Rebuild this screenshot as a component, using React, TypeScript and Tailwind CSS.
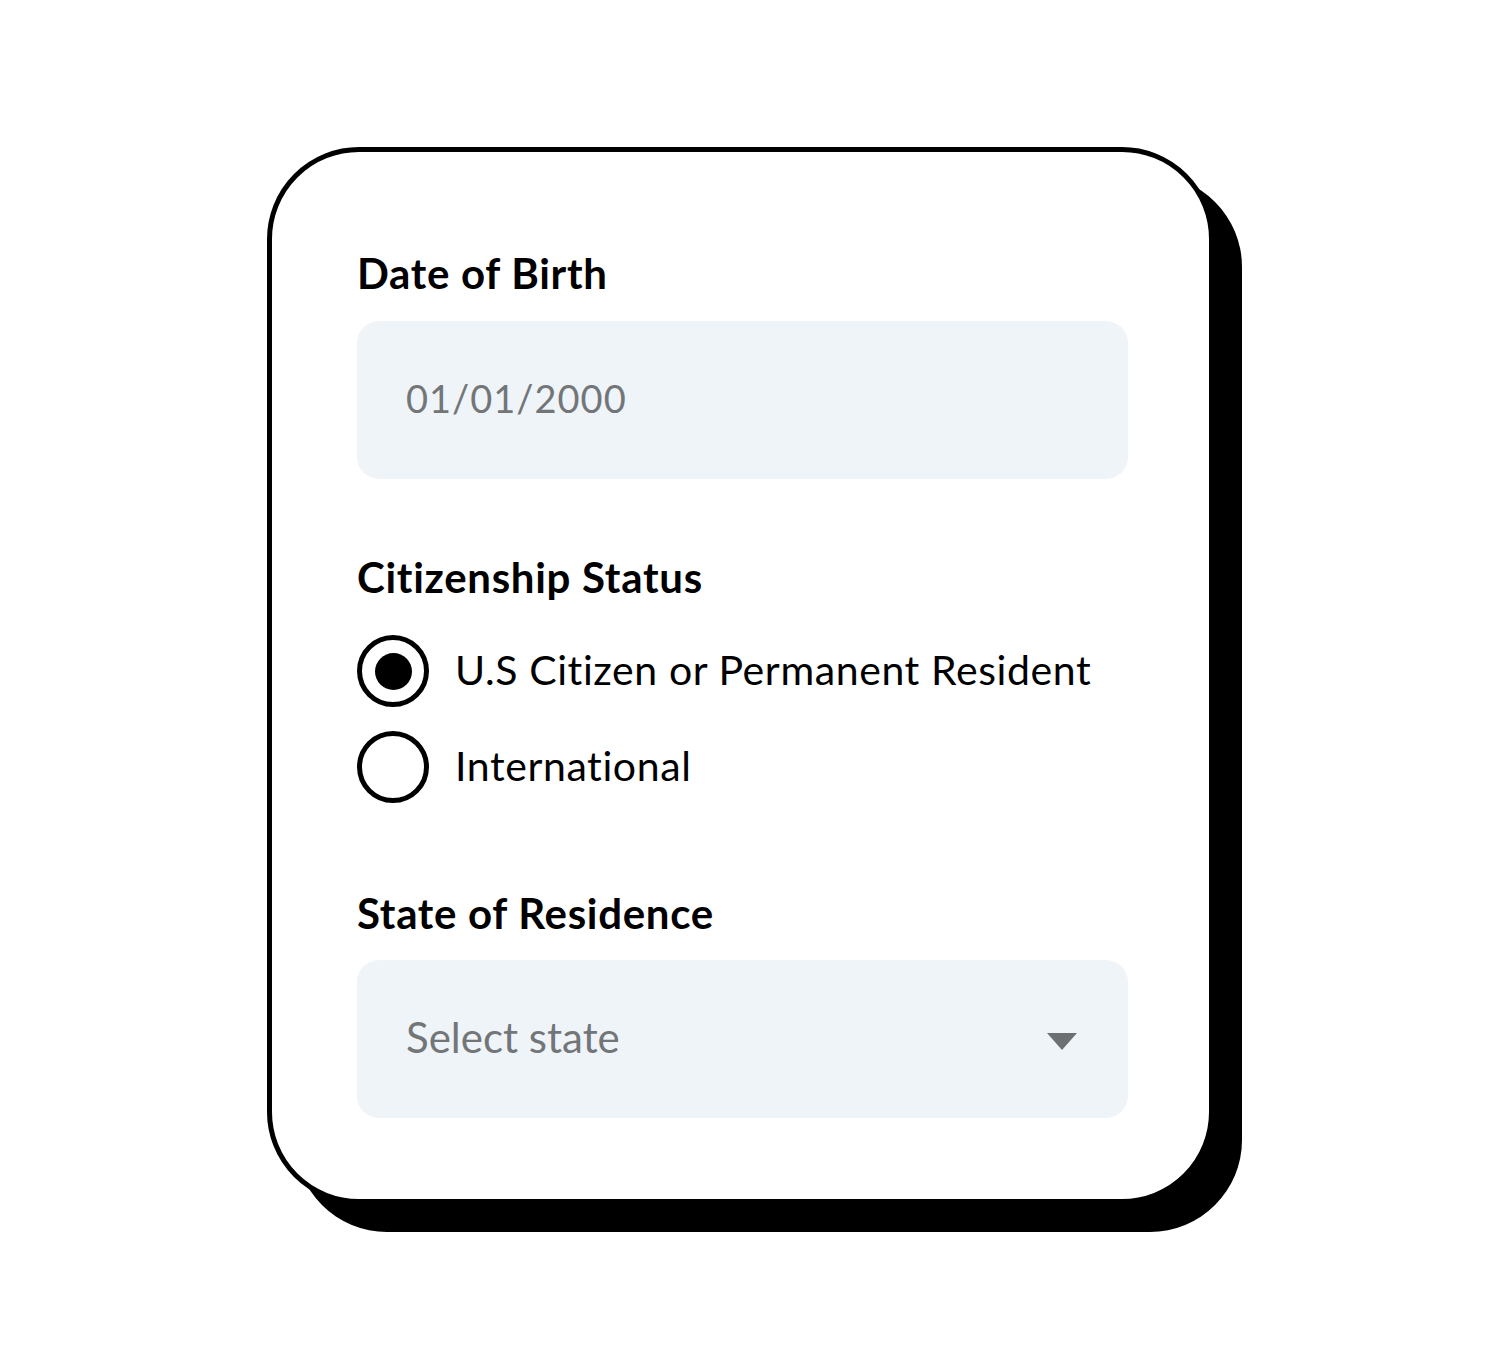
export default function App() {
  return (
    <div className="min-h-[1356px] w-[1488px] bg-white" style={{ fontFamily: 'Lato, "Noto Sans", sans-serif' }}>
      <div className="pl-[267px] pt-[147px]">
        {/* Card */}
        <div className="flex h-[1057px] w-[947px] flex-col rounded-[92px] border-[5px] border-black bg-white pl-[85px] pr-[81px] pt-[97px] pb-[81px] shadow-[28px_28px_0_0_#000]">
          {/* Date of Birth */}
          <div className="flex h-[48px] items-center text-[42px] font-bold tracking-[0.7px] text-black">Date of Birth</div>
          <div className="mt-[24px] flex h-[158px] items-center rounded-[22px] bg-[#eff4f8] pl-[49px] pb-[4px] text-[38px] tracking-[1px] text-[#737678]">
            01/01/2000
          </div>

          {/* Citizenship */}
          <div className="mt-[74px] flex h-[48px] items-center text-[42px] font-bold tracking-[0.7px] text-black">Citizenship Status</div>
          <div className="mt-[34px] flex flex-col gap-[24px]">
            <Radio checked label="U.S Citizen or Permanent Resident" />
            <Radio label="International" />
          </div>

          {/* State */}
          <div className="mt-[86px] flex h-[48px] items-center text-[42px] font-bold tracking-[0.7px] text-black">State of Residence</div>
          <div className="mt-[23px] flex h-[158px] items-center justify-between rounded-[22px] bg-[#eff4f8] pl-[49px] pr-[51px] text-[42px] text-[#737678]">
            <span className="pb-[4px]">Select state</span>
            <svg width="30" height="18" viewBox="0 0 30 18" className="mt-[6px]">
              <path d="M0 0 H30 L15 17 Z" fill="#6d7072" />
            </svg>
          </div>
        </div>
      </div>
    </div>
  )
}

function Radio({ checked, label }: { checked?: boolean; label: string }) {
  return (
    <div className="flex h-[72px] items-center gap-[26px]">
      <div className="flex h-[72px] w-[72px] items-center justify-center rounded-full border-[5px] border-black">
        {checked && <div className="h-[37px] w-[37px] rounded-full bg-black" />}
      </div>
      <span className="pb-[2px] text-[41px] tracking-[0.6px] text-black">{label}</span>
    </div>
  )
}
